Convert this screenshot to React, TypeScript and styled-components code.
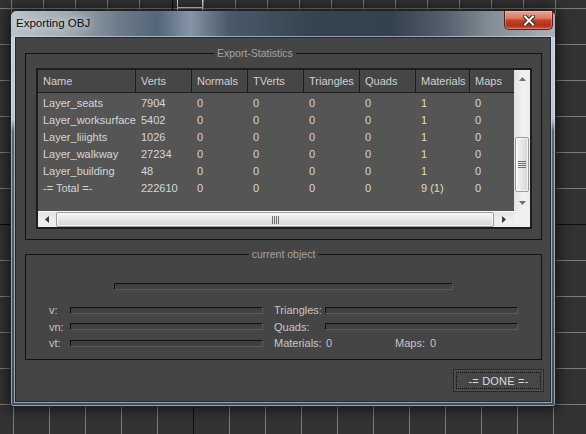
import React from 'react'
import styled, { createGlobalStyle } from 'styled-components'

const GlobalStyle = createGlobalStyle`
  html, body {
    margin: 0;
    padding: 0;
    background: #323232;
  }
  body {
    width: 586px;
    height: 434px;
    overflow: hidden;
    font-family: "Liberation Sans", Arial, sans-serif;
  }
  * { box-sizing: border-box; }
`

const Desktop = styled.div`
  position: relative;
  width: 586px;
  height: 434px;
  padding: 10px 30px 27px 10px;
  background: #323232;
  overflow: hidden;
`

const Viewport = styled.svg`
  position: absolute;
  left: 0;
  top: 0;
`

const Window = styled.div`
  position: relative;
  width: 546px;
  height: 397px;
  display: flex;
  flex-direction: column;
  padding: 0 4px 4px;
  border: 1px solid #1b232c;
  border-radius: 7px 7px 3px 3px;
  background: linear-gradient(180deg, #c9d0d7 0px, #bcc4cc 108px, #5a6774 120px, #3e4b58 100%);
  box-shadow: 0 0 12px 3px rgba(0, 0, 0, 0.55), inset 0 0 0 1px rgba(225, 233, 241, 0.55);
`

const TitleBar = styled.div`
  height: 26px;
  margin: 0 -4px;
  padding: 0 2px 0 5px;
  display: flex;
  align-items: flex-start;
  justify-content: space-between;
  border-radius: 6px 6px 0 0;
  background: linear-gradient(90deg, #bcc4cb 0%, #a3acb5 10%, #6c7a88 20%, #55667a 27%, #8595a6 33%, #4a5a6a 40%, #36444f 55%, #34424e 70%, #55616d 80%, #838d97 88%, #a9b1b9 100%);
`

const Title = styled.span`
  margin-top: 6px;
  font-size: 11.5px;
  color: #0d0d0d;
  text-shadow: 0 0 6px rgba(230, 236, 242, 0.9), 0 0 10px rgba(230, 236, 242, 0.7);
`

const CloseButton = styled.div`
  width: 49px;
  height: 19px;
  display: flex;
  align-items: center;
  justify-content: center;
  border: 1px solid #57201a;
  border-top: none;
  border-radius: 0 0 5px 5px;
  background: linear-gradient(180deg, #e7a593 0%, #d97a64 40%, #c2432b 52%, #b3301b 80%, #cc5a3b 100%);
  box-shadow: inset 0 0 0 1px rgba(255, 210, 200, 0.35);
`

const Client = styled.div`
  flex: 1;
  display: flex;
  flex-direction: column;
  padding: 8px 6px 0 9px;
  background: #454545;
  border: 1px solid #1f2a35;
  box-shadow: 0 0 0 1px rgba(215, 225, 235, 0.6);
`

const Group = styled.fieldset<{ $padTop: number; $padBottom: number; $padX: string }>`
  margin: 0 2px 0 0;
  min-width: 0;
  border: 1px solid #121212;
  padding: ${p => p.$padTop}px ${p => p.$padX} ${p => p.$padBottom}px;
`

const SecondGroup = styled(Group)`
  margin-top: 7px;
`

const Legend = styled.legend<{ $offset?: number }>`
  padding: 0 3px;
  font-size: 10.5px;
  line-height: 14px;
  color: #a3a3a3;
  margin-left: ${p => (p.$offset !== undefined ? `${p.$offset}px` : 'auto')};
  margin-right: auto;
`

const List = styled.div`
  width: 496px;
  height: 161px;
  border: 2px solid #1d1d1d;
  display: grid;
  grid-template-columns: 1fr 16px;
  grid-template-rows: 1fr 16px;
  background: #555555;
`

const ListBody = styled.div`
  display: flex;
  flex-direction: column;
  overflow: hidden;
`

const COLS = '98px 56px 56px 56px 56px 56px 54px 1fr'

const HeaderRow = styled.div`
  display: grid;
  grid-template-columns: ${COLS};
  height: 23px;
  background: #464646;
  border-bottom: 1px solid #1c1c1c;
`

const HeaderCell = styled.div`
  display: flex;
  align-items: center;
  padding-left: 5px;
  font-size: 11px;
  color: #d0d0d0;
  border-right: 1px solid #1c1c1c;
  &:last-child { border-right: none; }
`

const Rows = styled.div`
  padding-top: 1px;
`

const Row = styled.div`
  display: grid;
  grid-template-columns: ${COLS};
  height: 17px;
`

const Cell = styled.div<{ $accent?: boolean }>`
  display: flex;
  align-items: center;
  padding-left: 5px;
  font-size: 11px;
  white-space: nowrap;
  color: ${p => (p.$accent ? '#e2dcb4' : '#d6d6d6')};
`

const VScroll = styled.div`
  display: flex;
  flex-direction: column;
  background: linear-gradient(90deg, #e2e2e2, #f2f2f2 60%, #ececec);
`

const HScroll = styled.div`
  display: flex;
  align-items: center;
  border-top: 1px solid #fafafa;
  background: linear-gradient(180deg, #e4e4e4, #f0f0f0 60%, #ebebeb);
`

const ArrowButton = styled.div<{ $w: number; $h: number }>`
  width: ${p => p.$w}px;
  height: ${p => p.$h}px;
  flex: none;
  display: flex;
  align-items: center;
  justify-content: center;
`

const VTrack = styled.div`
  flex: 1;
  display: flex;
  flex-direction: column;
  align-items: center;
`

const VThumb = styled.div`
  margin-top: 50px;
  width: 14px;
  height: 55px;
  border: 1px solid #9c9c9c;
  border-radius: 2px;
  background: linear-gradient(90deg, #f6f6f6, #e6e6e6 50%, #d4d4d4);
  box-shadow: inset 0 0 0 1px rgba(255, 255, 255, 0.7);
  display: flex;
  align-items: center;
  justify-content: center;
`

const HThumb = styled.div`
  width: 438px;
  height: 15px;
  margin-left: 1px;
  border: 1px solid #9c9c9c;
  border-radius: 2px;
  background: linear-gradient(180deg, #f6f6f6, #e6e6e6 50%, #d4d4d4);
  box-shadow: inset 0 0 0 1px rgba(255, 255, 255, 0.7);
  display: flex;
  align-items: center;
  justify-content: center;
`

const Corner = styled.div`
  background: #f0f0f0;
`

const Sunken = styled.div<{ $w: number }>`
  width: ${p => p.$w}px;
  height: 7px;
  border-top: 1px solid #121212;
  border-left: 1px solid #121212;
  border-bottom: 1px solid #5b5b5b;
  border-right: 1px solid #5b5b5b;
  background: #404040;
`

const CenterBar = styled(Sunken)`
  margin: 0 auto;
`

const StatGrid = styled.div`
  margin-top: 12px;
  display: grid;
  grid-template-columns: 21px 204px 51px 1fr;
  grid-template-rows: 16px 17px 16px;
  align-items: center;
`

const Label = styled.span`
  font-size: 11px;
  color: #c6c6c6;
  white-space: nowrap;
`

const Inline = styled.div`
  display: flex;
  align-items: center;
  padding-left: 1px;
`

const Value = styled(Label)<{ $w: number }>`
  width: ${p => p.$w}px;
`

const Footer = styled.div`
  margin-top: 9px;
  display: flex;
  justify-content: flex-end;
`

const DoneButton = styled.div`
  width: 91px;
  height: 23px;
  padding: 2px;
  border: 1px solid #2b2b2b;
  background: #474747;
  box-shadow: inset 0 0 0 1px #505050;
`

const FocusRing = styled.div`
  height: 100%;
  display: flex;
  align-items: center;
  justify-content: center;
  border: 1px dotted #0e0e0e;
  font-size: 11px;
  color: #d4dae2;
  letter-spacing: 0.2px;
`

const columns = ['Name', 'Verts', 'Normals', 'TVerts', 'Triangles', 'Quads', 'Materials', 'Maps']

const rows = [
  ['Layer_seats', '7904', '0', '0', '0', '0', '1', '0'],
  ['Layer_worksurface', '5402', '0', '0', '0', '0', '1', '0'],
  ['Layer_liiights', '1026', '0', '0', '0', '0', '1', '0'],
  ['Layer_walkway', '27234', '0', '0', '0', '0', '1', '0'],
  ['Layer_building', '48', '0', '0', '0', '0', '1', '0'],
  ['-= Total =-', '222610', '0', '0', '0', '0', '9 (1)', '0'],
]

const hLines = [8, 44, 80, 116, 152, 188, 260, 296, 332, 368, 404]
const topV = Array.from({ length: 18 }, (_, i) => 11 + 32 * i).filter(x => x !== 171)
const bottomV = Array.from({ length: 17 }, (_, i) => 13 + 36 * i).filter(x => x !== 193)

const GridDrawing = () => (
  <Viewport width={586} height={434} viewBox="0 0 586 434">
    <g stroke="#7d7d7d" strokeWidth={1} shapeRendering="crispEdges">
      {hLines.map(y => (
        <line key={'h' + y} x1={0} y1={y + 0.5} x2={586} y2={y + 0.5} />
      ))}
      {topV.map(x => (
        <line key={'t' + x} x1={x + 0.5} y1={0} x2={x + 0.5} y2={224} />
      ))}
      {bottomV.map(x => (
        <line key={'b' + x} x1={x + 0.5} y1={225} x2={x + 0.5} y2={434} />
      ))}
    </g>
    <g stroke="#0c0c0c" strokeWidth={1} shapeRendering="crispEdges">
      <line x1={0} y1={224.5} x2={586} y2={224.5} />
      <line x1={172.5} y1={0} x2={172.5} y2={224} />
      <line x1={193.5} y1={225} x2={193.5} y2={434} />
    </g>
    <g stroke="#d8d8d8" strokeWidth={1} shapeRendering="crispEdges" fill="none">
      <line x1={177.5} y1={0} x2={177.5} y2={10} />
      <line x1={202.5} y1={0} x2={202.5} y2={10} />
      <line x1={177} y1={7.5} x2={203} y2={7.5} />
    </g>
  </Viewport>
)

const Tri = ({ dir, color }: { dir: 'up' | 'down' | 'left' | 'right'; color: string }) => {
  const pts = {
    up: '0,4 7,4 3.5,0',
    down: '0,0 7,0 3.5,4',
    left: '4,0 4,7 0,3.5',
    right: '0,0 0,7 4,3.5',
  }[dir]
  const vertical = dir === 'up' || dir === 'down'
  return (
    <svg width={vertical ? 7 : 4} height={vertical ? 4 : 7}>
      <polygon points={pts} fill={color} />
    </svg>
  )
}

const Grip = ({ vertical }: { vertical?: boolean }) => (
  <svg width={vertical ? 8 : 7} height={vertical ? 7 : 8} shapeRendering="crispEdges">
    {[0, 2, 4, 6].map(o =>
      vertical ? (
        <line key={o} x1={0} y1={o + 0.5} x2={8} y2={o + 0.5} stroke="#6e6e6e" />
      ) : (
        <line key={o} x1={o + 0.5} y1={0} x2={o + 0.5} y2={8} stroke="#6e6e6e" />
      )
    )}
  </svg>
)

const App = () => {
  return (
    <>
      <GlobalStyle />
      <Desktop>
        <GridDrawing />
        <Window>
          <TitleBar>
            <Title>Exporting OBJ</Title>
            <CloseButton>
              <svg width={12} height={11} viewBox="0 0 12 11">
                <path d="M2 1.5 L10 9.5 M10 1.5 L2 9.5" stroke="#3a2520" strokeWidth={4} strokeLinecap="square" />
                <path d="M2 1.5 L10 9.5 M10 1.5 L2 9.5" stroke="#ffffff" strokeWidth={2} strokeLinecap="square" />
              </svg>
            </CloseButton>
          </TitleBar>
          <Client>
            <Group $padTop={8} $padBottom={10} $padX="10px">
              <Legend $offset={178}>Export-Statistics</Legend>
              <List>
                <ListBody>
                  <HeaderRow>
                    {columns.map(c => (
                      <HeaderCell key={c}>{c}</HeaderCell>
                    ))}
                  </HeaderRow>
                  <Rows>
                    {rows.map(r => (
                      <Row key={r[0]}>
                        {r.map((v, i) => (
                          <Cell key={i} $accent={i === 6}>
                            {v}
                          </Cell>
                        ))}
                      </Row>
                    ))}
                  </Rows>
                </ListBody>
                <VScroll>
                  <ArrowButton $w={16} $h={17}>
                    <Tri dir="up" color="#707070" />
                  </ArrowButton>
                  <VTrack>
                    <VThumb>
                      <Grip vertical />
                    </VThumb>
                  </VTrack>
                  <ArrowButton $w={16} $h={17}>
                    <Tri dir="down" color="#707070" />
                  </ArrowButton>
                </VScroll>
                <HScroll>
                  <ArrowButton $w={17} $h={15}>
                    <Tri dir="left" color="#3a3a3a" />
                  </ArrowButton>
                  <HThumb>
                    <Grip />
                  </HThumb>
                  <ArrowButton $w={19} $h={15}>
                    <Tri dir="right" color="#3a3a3a" />
                  </ArrowButton>
                </HScroll>
                <Corner />
              </List>
            </Group>
            <SecondGroup $padTop={22} $padBottom={8} $padX="23px">
              <Legend>current object</Legend>
              <CenterBar $w={339} />
              <StatGrid>
                <Label>v:</Label>
                <Sunken $w={193} />
                <Label>Triangles:</Label>
                <Sunken $w={193} />
                <Label>vn:</Label>
                <Sunken $w={193} />
                <Label>Quads:</Label>
                <Sunken $w={193} />
                <Label>vt:</Label>
                <Sunken $w={193} />
                <Label>Materials:</Label>
                <Inline>
                  <Value $w={69}>0</Value>
                  <Value $w={35}>Maps:</Value>
                  <Label>0</Label>
                </Inline>
              </StatGrid>
            </SecondGroup>
            <Footer>
              <DoneButton>
                <FocusRing>-= DONE =-</FocusRing>
              </DoneButton>
            </Footer>
          </Client>
        </Window>
      </Desktop>
    </>
  )
}

export default App
